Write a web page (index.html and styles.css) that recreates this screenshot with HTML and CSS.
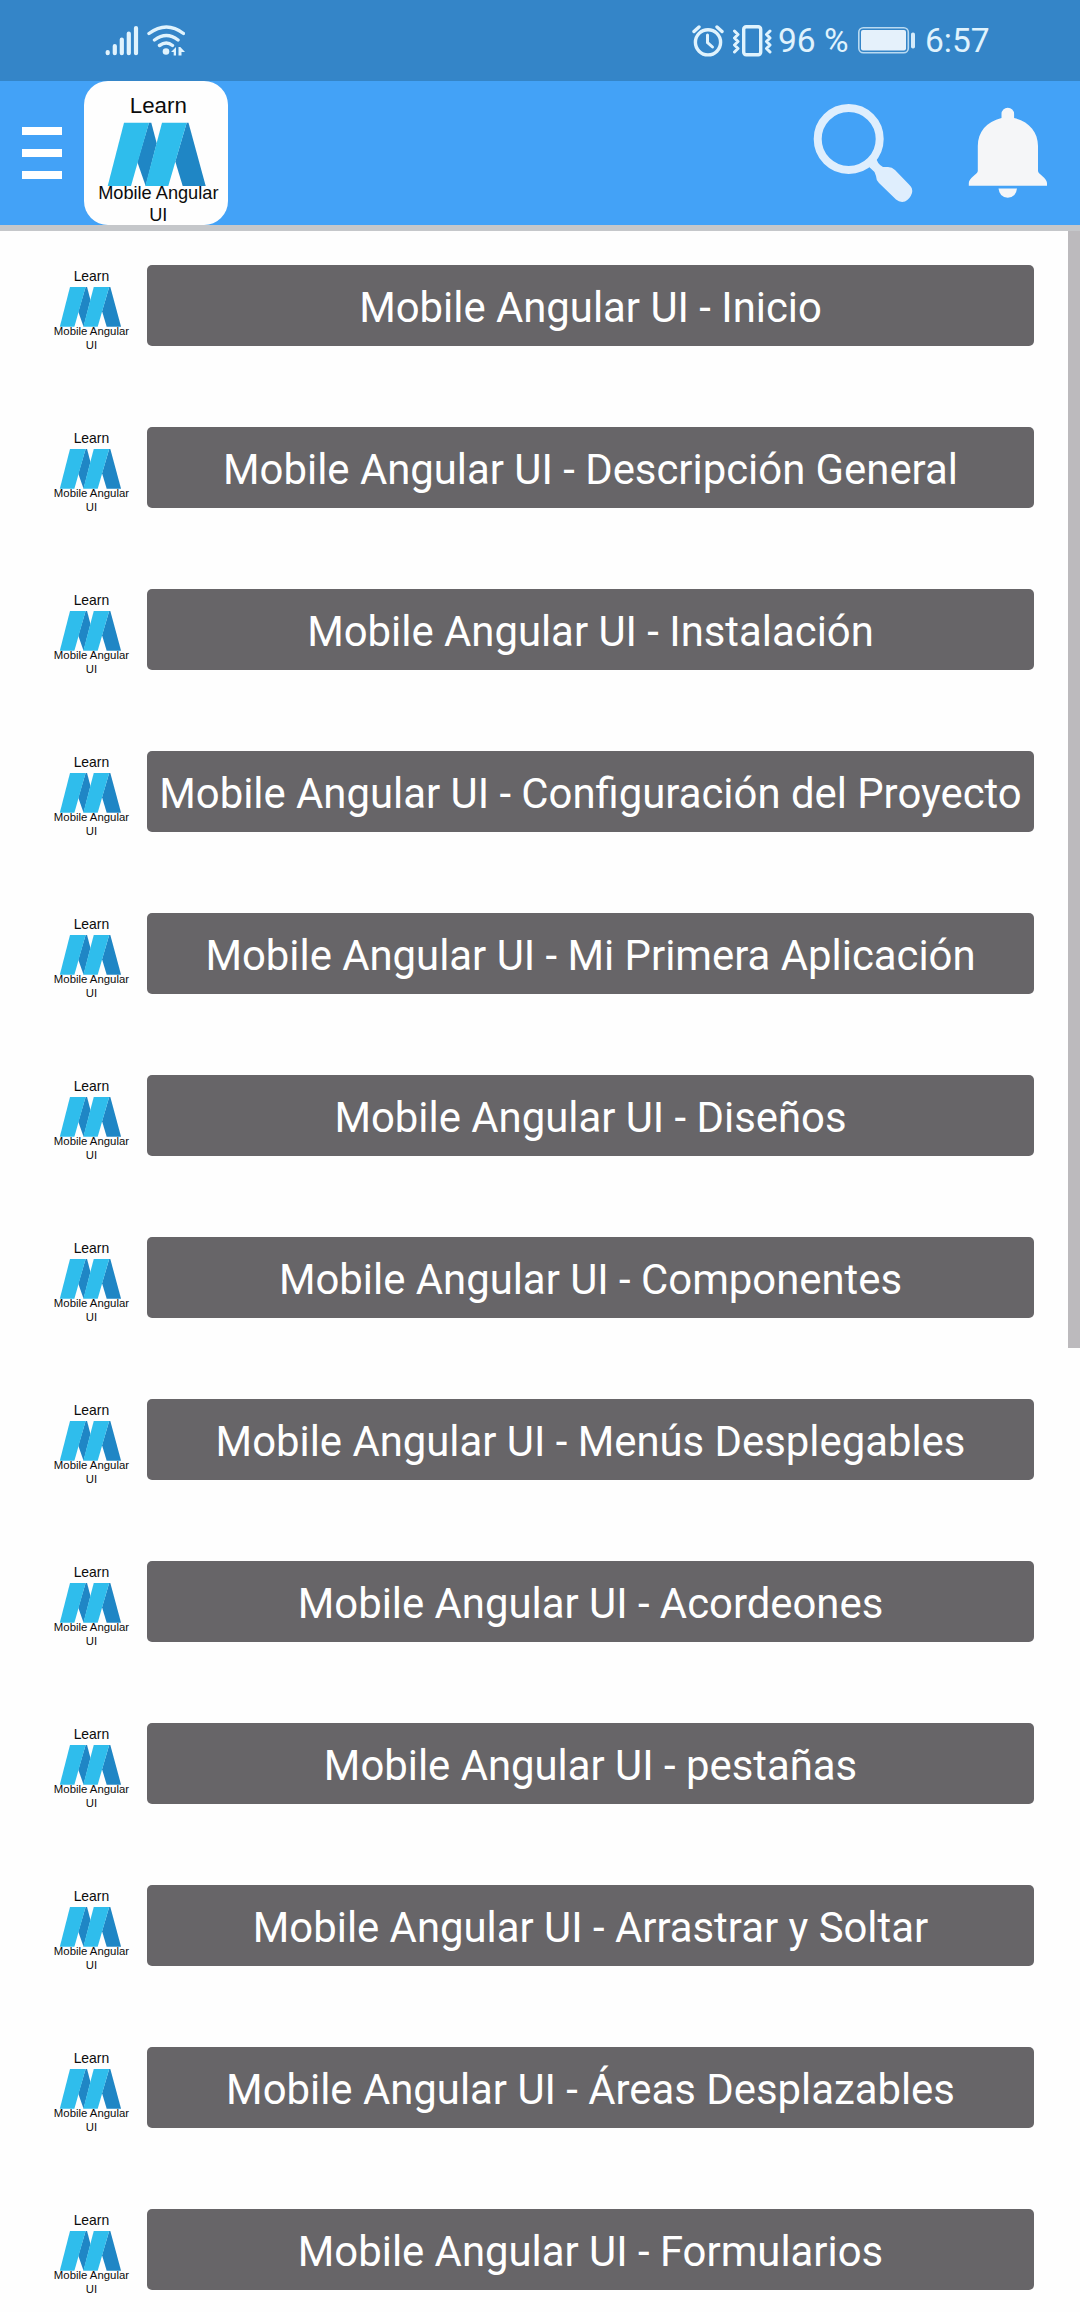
FILE: index.html
```html
<!DOCTYPE html>
<html lang="es">
<head>
    <meta charset="UTF-8">
    <meta name="viewport" content="width=device-width, initial-scale=1.0">
    <title>Learn Mobile Angular UI</title>
    <link rel="stylesheet" href="styles.css">
</head>
<body>
    <div class="status-bar">
        <svg class="network" width="80" height="32" viewBox="0 0 80 32">
            <g stroke="#e0f3fd" stroke-width="4.2" stroke-linecap="round" fill="none">
                <path d="M2.7 27v1.200M9.800 21v7.200M16.800 14.500v13.700M23.800 8.500v19.700M31 3v25.200"/>
                <path stroke-width="3.400" d="M44 8.500Q61.500 -4.500 78.500 8.500M49.500 15Q61.500 6 73 15M54.500 20.500Q61.500 15.500 67.500 20.500"/>
            </g>
            <circle cx="61" cy="26.500" r="3.300" fill="#e0f3fd"/>
            <path d="M66 27l5-5v8.500h-2.300V27zM73.500 22h1.800l4.700 5h-3.500v3.500h-3z" fill="#e0f3fd"/>
        </svg>
        <div class="status-right">
            <svg width="32" height="34" viewBox="0 0 32 34" fill="none" stroke="#e0f3fd" stroke-width="3.400" stroke-linecap="round">
                <circle cx="16" cy="18.300" r="12.600"/>
                <path d="M2 7.500l5-4.500M30 7.500l-5-4.500"/>
                <path d="M15.500 11v7.500l5 4.500" stroke-width="3"/>
            </svg>
            <svg class="vibrate" width="40" height="34" viewBox="0 0 40 34" fill="none" stroke="#e0f3fd" stroke-width="3.400">
                <rect x="11.700" y="2.700" width="17" height="28" rx="2.500"/>
                <path stroke-width="3" stroke-linecap="round" stroke-linejoin="round" d="M2.500 7l3.500 3.500-3.500 3.500 3.500 3.500-3.500 3.500 3.500 3.500-3.500 3.500M38 7l-3.500 3.500 3.500 3.500-3.500 3.500 3.500 3.500-3.500 3.500 3.500 3.500"/>
            </svg>
            <span class="percent">96 %</span>
            <svg class="battery" width="60" height="30" viewBox="0 0 60 30">
                <rect x="1.800" y="1.800" width="49.500" height="25" rx="4.500" fill="none" stroke="#b9daf1" stroke-width="1.600"/>
                <rect x="4" y="4" width="45" height="20.500" rx="2" fill="#e5f1fb"/>
                <rect x="54" y="6.500" width="4" height="16" rx="1.800" fill="#d5ebfa"/>
            </svg>
            <span class="clock">6:57</span>
        </div>
    </div>

    <div class="header">
        <div class="menu">
            <span></span>
            <span></span>
            <span></span>
        </div>
        <svg class="logo" viewBox="0 0 144 144">
            <g id="logo">
                <polygon fill="#1f86c5" points="65,41.7 67.3,41.7 72.7,62.3 61.7,105 53.3,81"/>
                <polygon fill="#2fbdec" points="40,41.7 65,41.7 47,105 23.7,105"/>
                <polygon fill="#1f86c5" points="102.7,41.7 104.5,41.7 121.7,105 98.7,105 91.3,80.5"/>
                <polygon fill="#2fbdec" points="78,41.7 102.7,41.7 84.3,105 61.3,105"/>
                <text class="logo-text" x="74.3" y="32.4" font-size="22.3">Learn</text>
                <text class="logo-text" x="74.3" y="118.4" font-size="18.2">Mobile Angular</text>
                <text class="logo-text" x="74.3" y="140.4" font-size="18.2">UI</text>
            </g>
        </svg>
        <svg class="search" width="100" height="100" viewBox="0 0 100 100">
            <circle cx="35.700" cy="36" r="31" fill="none" stroke="#dfeefd" stroke-width="8"/>
            <path d="M54 62l9-8q1 7 7 10h5q4 0 7 3L96.500 82q3.500 3 2.500 8-2 6-7 8.500-5 1.500-9-2L66 80q-3-3-3-7l-1.500-4z" fill="#dfeefd"/>
        </svg>
        <svg class="bell" width="80" height="92" viewBox="0 0 80 92" fill="#f5f6f8">
            <path d="M33.500 11V7a6.300 6.300 0 0 1 12.600 0v4C61 14.500 70 25 70 39v25c0 3 9 7 9 12v2.700H.800V76c0-5 9-9 9-12V39C9.800 25 18.500 14.500 33.500 11z"/>
            <path d="M30.500 81.500h18.500q-1 9-9.250 9.300-8.250-.3-9.250-9.300z"/>
        </svg>
    </div>

    <div class="content">
        <div class="list">
            <div class="row"><svg class="thumb" viewBox="0 0 144 144"><use href="#logo"/></svg><a class="btn">Mobile Angular UI - Inicio</a></div>
            <div class="row"><svg class="thumb" viewBox="0 0 144 144"><use href="#logo"/></svg><a class="btn">Mobile Angular UI - Descripción General</a></div>
            <div class="row"><svg class="thumb" viewBox="0 0 144 144"><use href="#logo"/></svg><a class="btn">Mobile Angular UI - Instalación</a></div>
            <div class="row"><svg class="thumb" viewBox="0 0 144 144"><use href="#logo"/></svg><a class="btn">Mobile Angular UI - Configuración del Proyecto</a></div>
            <div class="row"><svg class="thumb" viewBox="0 0 144 144"><use href="#logo"/></svg><a class="btn">Mobile Angular UI - Mi Primera Aplicación</a></div>
            <div class="row"><svg class="thumb" viewBox="0 0 144 144"><use href="#logo"/></svg><a class="btn">Mobile Angular UI - Diseños</a></div>
            <div class="row"><svg class="thumb" viewBox="0 0 144 144"><use href="#logo"/></svg><a class="btn">Mobile Angular UI - Componentes</a></div>
            <div class="row"><svg class="thumb" viewBox="0 0 144 144"><use href="#logo"/></svg><a class="btn">Mobile Angular UI - Menús Desplegables</a></div>
            <div class="row"><svg class="thumb" viewBox="0 0 144 144"><use href="#logo"/></svg><a class="btn">Mobile Angular UI - Acordeones</a></div>
            <div class="row"><svg class="thumb" viewBox="0 0 144 144"><use href="#logo"/></svg><a class="btn">Mobile Angular UI - pestañas</a></div>
            <div class="row"><svg class="thumb" viewBox="0 0 144 144"><use href="#logo"/></svg><a class="btn">Mobile Angular UI - Arrastrar y Soltar</a></div>
            <div class="row"><svg class="thumb" viewBox="0 0 144 144"><use href="#logo"/></svg><a class="btn">Mobile Angular UI - Áreas Desplazables</a></div>
            <div class="row"><svg class="thumb" viewBox="0 0 144 144"><use href="#logo"/></svg><a class="btn">Mobile Angular UI - Formularios</a></div>
        </div>
        <div class="scrollbar"></div>
    </div>
</body>
</html>
```

FILE: styles.css
```css
* {
    box-sizing: border-box;
}
body {
    margin: 0;
    height: 2312px;
    overflow: hidden;
    font-family: Roboto, sans-serif;
    background: #fefefe;
    display: flex;
    flex-direction: column;
}
svg {
    display: block;
    flex-shrink: 0;
}
.logo-text {
    font-family: "Liberation Sans", Arial, sans-serif;
    text-anchor: middle;
    fill: #0c0c0c;
}

/* status bar */
.status-bar {
    height: 81px;
    flex-shrink: 0;
    display: flex;
    justify-content: space-between;
    align-items: center;
    padding: 0 90px 0 105px;
    background: #3485c8;
    color: #e0f3fd;
    font-size: 33.5px;
}
.status-right {
    display: flex;
    align-items: center;
    white-space: nowrap;
}
.vibrate {
    margin-left: 8px;
}
.percent {
    width: 71px;
    margin-left: 6px;
}
.battery {
    margin-left: 8px;
}
.clock {
    width: 65px;
    margin-left: 8px;
}

/* toolbar */
.header {
    height: 150px;
    flex-shrink: 0;
    display: flex;
    align-items: flex-start;
    padding-left: 22px;
    background: #43a2f7;
    border-bottom: 6px solid #c5c7ca;
}
.menu {
    width: 40px;
    margin-top: 46px;
    display: flex;
    flex-direction: column;
    gap: 14px;
}
.menu span {
    height: 8px;
    background: white;
}
.logo {
    width: 144px;
    height: 144px;
    margin-left: 22px;
    border-radius: 24px;
    background: #fefefe;
}
.search {
    margin: 22px 0 0 585px;
}
.bell {
    margin: 26px 0 0 55px;
}

/* lessons */
.content {
    flex: 1;
    min-height: 0;
    display: flex;
    justify-content: space-between;
    align-items: flex-start;
}
.list {
    width: 1034px;
    padding: 30px 0 0 45px;
    display: flex;
    flex-direction: column;
    gap: 72px;
}
.row {
    height: 90px;
    display: flex;
    gap: 12px;
}
.thumb {
    width: 90px;
    height: 90px;
}
.btn {
    flex: 1;
    height: 81px;
    margin-top: 4px;
    padding-top: 2px;
    border-radius: 5px;
    background: #676568;
    color: white;
    font-size: 41.85px;
    line-height: 81px;
    text-align: center;
    white-space: nowrap;
}
.scrollbar {
    width: 12px;
    height: 1117px;
    background: #bcbabd;
}
```
